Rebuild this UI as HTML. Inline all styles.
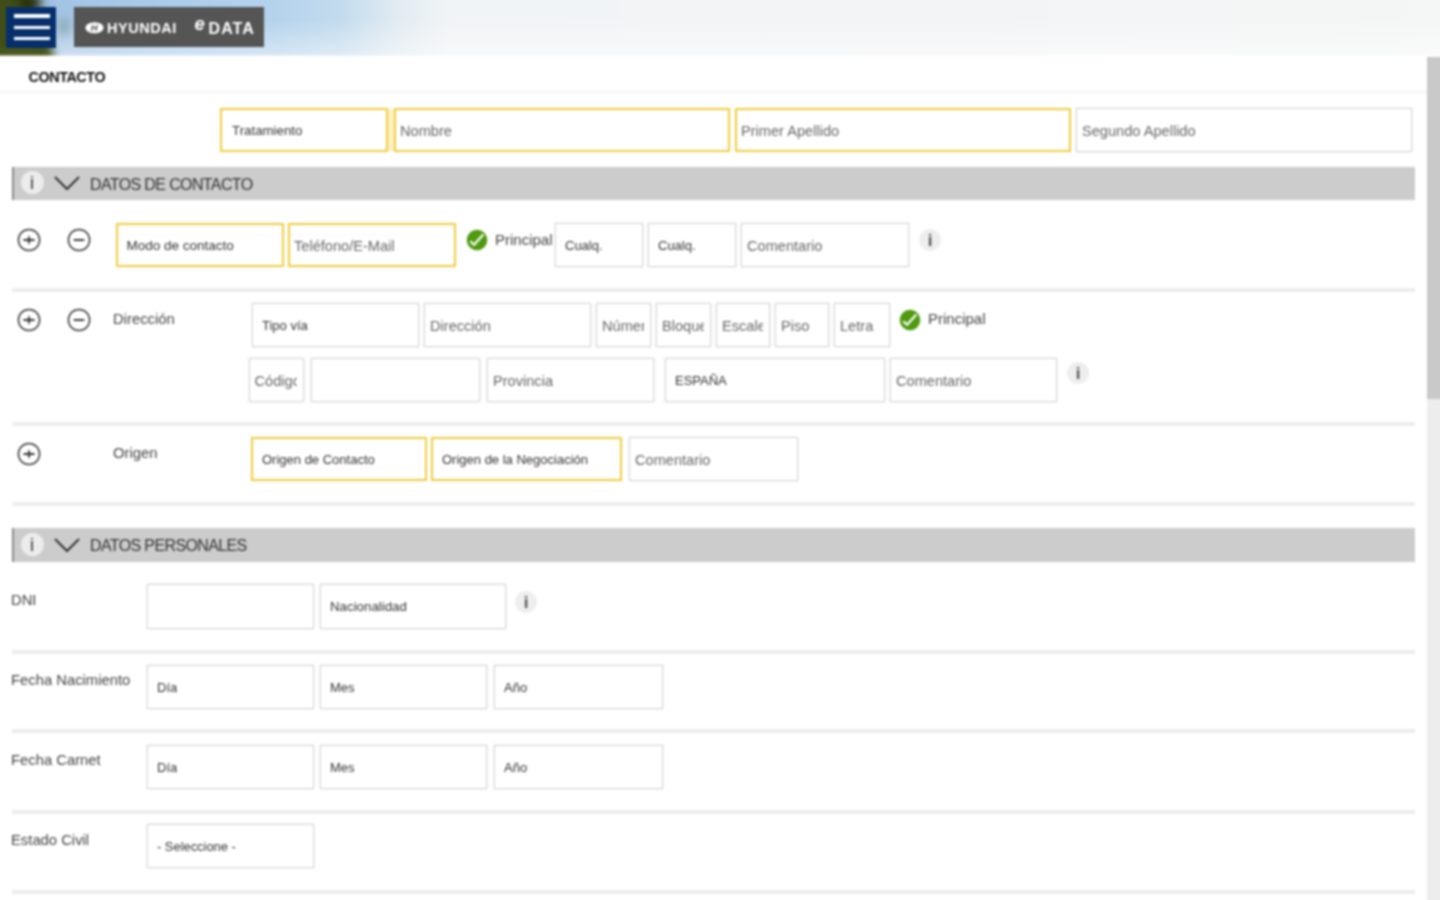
<!DOCTYPE html>
<html lang="es">
<head>
<meta charset="utf-8">
<title>Contacto</title>
<style>
*{box-sizing:border-box;margin:0;padding:0}
html,body{width:1440px;height:900px;overflow:hidden;background:#fff}
body{font-family:"Liberation Sans",Arial,sans-serif;color:#333;position:relative}
#app{position:absolute;left:-30px;top:-30px;width:1500px;height:960px;overflow:hidden;background:#fff;filter:blur(.8px)}
#page{position:absolute;left:30px;top:30px;width:1440px;height:900px}
.abs{position:absolute}
/* header */
#hero{left:-30px;top:-30px;width:1500px;height:86px;background:
 linear-gradient(180deg,rgba(255,255,255,0) 0px,rgba(255,255,255,0) 50px,rgba(255,255,255,.45) 86px),
 linear-gradient(90deg,#8fb0cf 0px,#8fb0cf 30px,#a3c4e4 90px,#a9cbea 180px,#b4d2ec 300px,#c3dbee 370px,#e3ecf2 430px,#f1f4f6 480px,#f3f4f6 930px,#f5f7f6 1500px)}
#tree{left:-30px;top:-30px;width:160px;height:86px;overflow:hidden}
#heroFade{left:-30px;top:54px;width:1500px;height:4px;background:linear-gradient(180deg,rgba(255,255,255,0),#fff)}
#menu{left:6px;top:6.5px;width:50.3px;height:41.3px;background:#062f6c}
#menu i{position:absolute;left:7.6px;width:36.2px;height:3.4px;background:#fff}
#logo{left:74px;top:6.6px;width:190.3px;height:40.8px;background:#555;color:#fff;font-weight:bold;font-size:15px;line-height:40px;white-space:nowrap}
/* scrollbar */
#sbar{left:1427px;top:57px;width:43px;height:873px;background:#ededed}
#sthumb{left:1427px;top:57px;width:43px;height:342px;background:#c9c9c9}
/* page */
h1{position:absolute;left:28.5px;top:68.5px;font-size:14.3px;line-height:17px;font-weight:bold;color:#111;letter-spacing:-0.38px}
.hr{position:absolute;left:12px;width:1403px;height:4px;background:#ededed;margin-top:-.5px}
.bar{position:absolute;left:12px;width:1403px;height:32.5px;background:#ccc;border-left:2px solid #8a8a8a}
.bar span{position:absolute;left:76px;top:1px;line-height:33px;font-size:16px;letter-spacing:-.62px;color:#333;white-space:nowrap}
.f{position:absolute;height:44px;border:1px solid #d6d6d6;background:#fff;box-shadow:0 0 2px rgba(0,0,0,.12);font-size:14.6px;line-height:44px;padding-left:5px;color:#666;white-space:nowrap;overflow:hidden}
.f span{display:block;overflow:hidden;margin-right:6px}
.f.y{border:2.4px solid #f3cb3c;box-shadow:none;line-height:42px;padding-left:4px}
.f.s{color:#333;padding-left:9px;font-size:13px}
.f.y.s{padding-left:9px}
.lbl{position:absolute;font-size:14.8px;line-height:18px;color:#444;white-space:nowrap}
svg{position:absolute;overflow:visible}
.ic{position:absolute;width:24px;height:24px}
.ic svg{left:0;top:0;width:24px;height:24px}
.info{position:absolute;width:22px;height:22px;border-radius:50%;background:#eee;color:#555;font-size:17px;line-height:23px;text-align:center;font-weight:bold}
.bar .info{left:6.5px;top:4.5px;font-weight:normal;font-size:18px;background:#ececec;color:#333;width:23px;height:23px;line-height:25px}

</style>
</head>
<body>
<div id="app"><div id="page">
  <div id="hero" class="abs"></div><svg id="tree" class="abs" viewBox="-30 -30 160 86"><defs><filter id="tb" x="-30%" y="-30%" width="160%" height="160%"><feGaussianBlur stdDeviation="4"/></filter></defs><g filter="url(#tb)"><polygon points="-30,-30 30,-30 33,2 47,30 55,62 -30,62" fill="#414d18"/><ellipse cx="30" cy="2" rx="12" ry="7" fill="#252c0c"/><ellipse cx="20" cy="54" rx="34" ry="6" fill="#4b5a1e"/><ellipse cx="64" cy="27" rx="5" ry="9" fill="#7f9a98" opacity=".7"/></g></svg><div id="heroFade" class="abs"></div>
  <div id="menu" class="abs"><i style="top:7.9px"></i><i style="top:19px"></i><i style="top:30.3px"></i></div>
  <div id="logo" class="abs"><svg viewBox="0 0 20 12" style="left:11px;top:15.5px;width:19px;height:11.5px"><ellipse cx="10" cy="6" rx="9.6" ry="5.8" fill="#fff"/><text x="9.6" y="9.6" font-size="10" font-style="italic" font-weight="bold" text-anchor="middle" fill="#555" font-family="Liberation Sans, sans-serif">H</text></svg><span style="position:absolute;left:33px;top:1px;font-size:14.5px;letter-spacing:.55px">HYUNDAI</span><span style="position:absolute;left:120.5px;top:-3px;font-size:18.5px;font-style:italic">e</span><span style="position:absolute;left:134.5px;top:2px;font-size:16px;letter-spacing:1.1px">DATA</span></div>
  <div id="sbar" class="abs"></div><div id="sthumb" class="abs"></div>

  <h1>CONTACTO</h1>
  <div class="hr" style="left:0;width:1427px;top:91px;height:2px;background:#f4f4f4"></div>

  <div class="abs" style="left:387px;top:109px;width:8px;height:42px;background:#fdf1c4"></div>
  <div class="f y s" style="left:220px;top:108px;width:168px;font-size:13.3px;padding-left:10px"><span>Tratamiento</span></div>
  <div class="f y" style="left:394px;top:108px;width:336px"><span>Nombre</span></div>
  <div class="f y" style="left:735px;top:108px;width:336px"><span>Primer Apellido</span></div>
  <div class="f" style="left:1076px;top:108px;width:336px"><span>Segundo Apellido</span></div>

  <div class="bar" style="top:166.8px;height:33px"><div class="info">i</div><svg viewBox="0 0 26 14" style="left:39.5px;top:9.6px;width:26px;height:14px"><path d="M1 1l12 12L25 1" stroke="#333" stroke-width="2" fill="none"/></svg><span>DATOS DE CONTACTO</span></div>

  <div class="ic" style="left:16.8px;top:228px"><svg viewBox="0 0 24 24"><circle cx="12" cy="12" r="10.6" fill="none" stroke="#3a3a3a" stroke-width="1.5"/><path d="M6.5 12h11M12 8.2v7.6" stroke="#333" stroke-width="1.8" fill="none"/></svg></div><div class="ic" style="left:67px;top:228px"><svg viewBox="0 0 24 24"><circle cx="12" cy="12" r="10.6" fill="none" stroke="#3a3a3a" stroke-width="1.5"/><path d="M6.7 12h10.6" stroke="#333" stroke-width="1.9" fill="none"/></svg></div><div class="ic" style="left:465px;top:228px"><svg viewBox="0 0 24 24"><circle cx="12" cy="12" r="10.3" fill="#4f9a10"/><path d="M5.3 13.3l3.8 3.4 9.2-10.2" stroke="#fff" stroke-width="2.2" fill="none"/></svg></div><div class="info" style="left:919px;top:229px">i</div>
  <div class="f y s" style="left:116px;top:223px;width:168px;font-size:13.5px;padding-left:8.5px"><span>Modo de contacto</span></div>
  <div class="f y" style="left:288px;top:223px;width:168px"><span>Teléfono/E-Mail</span></div>
  <div class="lbl" style="left:495px;top:230.5px;font-size:15px">Principal</div>
  <div class="f s" style="left:555px;top:223px;width:88px"><span>Cualq.</span></div>
  <div class="f s" style="left:648px;top:223px;width:88px"><span>Cualq.</span></div>
  <div class="f" style="left:741px;top:223px;width:168px"><span>Comentario</span></div>
  <div class="hr" style="top:288px"></div>

  <div class="ic" style="left:16.8px;top:308px"><svg viewBox="0 0 24 24"><circle cx="12" cy="12" r="10.6" fill="none" stroke="#3a3a3a" stroke-width="1.5"/><path d="M6.5 12h11M12 8.2v7.6" stroke="#333" stroke-width="1.8" fill="none"/></svg></div><div class="ic" style="left:67px;top:308px"><svg viewBox="0 0 24 24"><circle cx="12" cy="12" r="10.6" fill="none" stroke="#3a3a3a" stroke-width="1.5"/><path d="M6.7 12h10.6" stroke="#333" stroke-width="1.9" fill="none"/></svg></div><div class="ic" style="left:898px;top:308px"><svg viewBox="0 0 24 24"><circle cx="12" cy="12" r="10.3" fill="#4f9a10"/><path d="M5.3 13.3l3.8 3.4 9.2-10.2" stroke="#fff" stroke-width="2.2" fill="none"/></svg></div><div class="info" style="left:1067px;top:362px">i</div>
  <div class="lbl" style="left:113px;top:310px">Dirección</div>
  <div class="f s" style="left:252px;top:303px;width:167px"><span>Tipo vía</span></div>
  <div class="f" style="left:424px;top:303px;width:167px"><span>Dirección</span></div>
  <div class="f" style="left:596px;top:303px;width:55px"><span>Número</span></div>
  <div class="f" style="left:656px;top:303px;width:55px"><span>Bloque</span></div>
  <div class="f" style="left:716px;top:303px;width:54px"><span>Escalera</span></div>
  <div class="f" style="left:775px;top:303px;width:54px"><span>Piso</span></div>
  <div class="f" style="left:834px;top:303px;width:56px"><span>Letra</span></div>
  <div class="lbl" style="left:928px;top:310px;font-size:15px">Principal</div>

  <div class="f" style="left:249px;top:357.5px;width:55px;padding-left:4.5px"><span>Código Postal</span></div>
  <div class="f" style="left:311px;top:357.5px;width:169px"></div>
  <div class="f" style="left:487px;top:357.5px;width:167px"><span>Provincia</span></div>
  <div class="f s" style="left:665px;top:357.5px;width:220px"><span>ESPAÑA</span></div>
  <div class="f" style="left:890px;top:357.5px;width:167px"><span>Comentario</span></div>
  <div class="hr" style="top:422px"></div>

  <div class="ic" style="left:16.8px;top:442px"><svg viewBox="0 0 24 24"><circle cx="12" cy="12" r="10.6" fill="none" stroke="#3a3a3a" stroke-width="1.5"/><path d="M6.5 12h11M12 8.2v7.6" stroke="#333" stroke-width="1.8" fill="none"/></svg></div>
  <div class="lbl" style="left:113px;top:444px">Origen</div>
  <div class="f y s" style="left:251px;top:437px;width:176px"><span>Origen de Contacto</span></div>
  <div class="f y s" style="left:431px;top:437px;width:191px"><span>Origen de la Negociación</span></div>
  <div class="f" style="left:629px;top:437px;width:169px"><span>Comentario</span></div>
  <div class="hr" style="top:502px"></div>

  <div class="bar" style="top:528.3px;height:33.3px"><div class="info">i</div><svg viewBox="0 0 26 14" style="left:39.5px;top:9.6px;width:26px;height:14px"><path d="M1 1l12 12L25 1" stroke="#333" stroke-width="2" fill="none"/></svg><span>DATOS PERSONALES</span></div>

  <div class="info" style="left:515px;top:591px">i</div>
  <div class="lbl" style="left:11px;top:591px">DNI</div>
  <div class="f" style="left:147px;top:584px;width:167px;height:45px"></div>
  <div class="f s" style="left:320px;top:584px;width:186px;height:45px;font-size:13.3px"><span>Nacionalidad</span></div>
  <div class="hr" style="top:650px"></div>

  <div class="lbl" style="left:11px;top:671px">Fecha Nacimiento</div>
  <div class="f s" style="left:147px;top:665px;width:167px"><span>Día</span></div>
  <div class="f s" style="left:320px;top:665px;width:167px"><span>Mes</span></div>
  <div class="f s" style="left:494px;top:665px;width:169px"><span>Año</span></div>
  <div class="hr" style="top:729px"></div>

  <div class="lbl" style="left:11px;top:751px">Fecha Carnet</div>
  <div class="f s" style="left:147px;top:745px;width:167px"><span>Día</span></div>
  <div class="f s" style="left:320px;top:745px;width:167px"><span>Mes</span></div>
  <div class="f s" style="left:494px;top:745px;width:169px"><span>Año</span></div>
  <div class="hr" style="top:810px"></div>

  <div class="lbl" style="left:11px;top:831px">Estado Civil</div>
  <div class="f s" style="left:147px;top:824px;width:167px;font-size:12.9px"><span>- Seleccione -</span></div>
  <div class="hr" style="top:890px"></div>
</div></div>
</body>
</html>
